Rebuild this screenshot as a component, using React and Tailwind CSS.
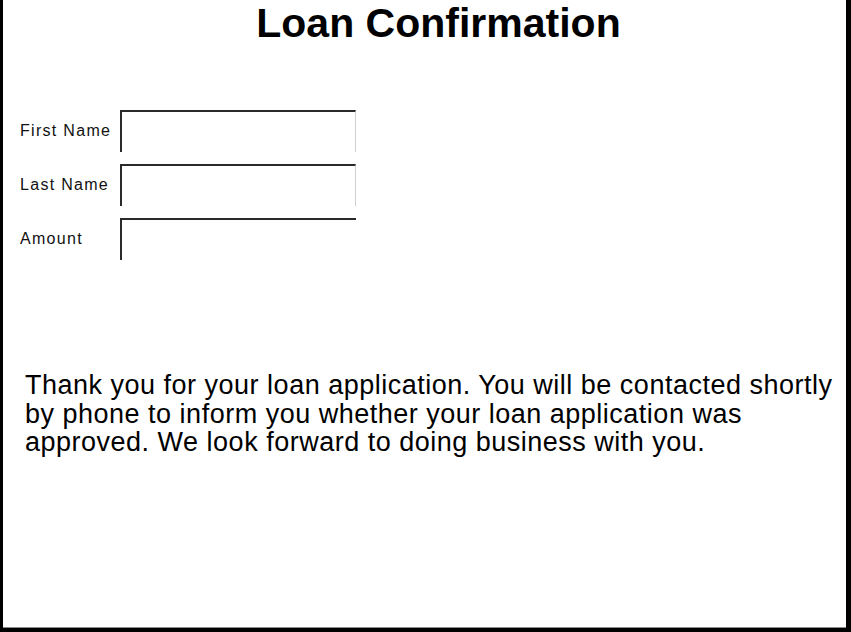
import React from 'react';

const fields = ['First Name', 'Last Name', 'Amount'];

export default function App() {
    return (
        <div className="w-[851px] h-[632px] bg-black pl-[3px] pr-[5px] pb-[4px] font-['Liberation_Sans',Arial,sans-serif]">
            <div className="h-full bg-white border-b border-[#8a8a8a] flex flex-col">
                {/* title */}
                <h1 className="mt-[3px] pl-[28px] text-center text-[41px] leading-none font-bold text-black">
                    Loan Confirmation
                </h1>

                {/* form */}
                <div className="mt-[66px] pl-[17px] flex flex-col gap-[12px]">
                    {fields.map((label, i) => (
                        <div key={label} className="flex items-center">
                            <label className="w-[100px] text-[16px] tracking-[1.3px] text-[#111]">{label}</label>
                            <input
                                type="text"
                                className={
                                    i === 2
                                        ? "w-[236px] h-[42px] bg-white border-t-2 border-l-2 border-[#2a2a2a] outline-none"
                                        : "w-[236px] h-[42px] bg-white border-t-2 border-l-2 border-[#2a2a2a] border-r border-r-[#cfcfcf] outline-none"
                                }
                            />
                        </div>
                    ))}
                </div>

                {/* message */}
                <p className="mt-[111px] pl-[22px] text-[27px] leading-[28.5px] tracking-[0.5px] text-black">
                    Thank you for your loan application. You will be contacted shortly by phone to inform you whether your loan application was approved. We look forward to doing business with you.
                </p>
            </div>
        </div>
    );
}
